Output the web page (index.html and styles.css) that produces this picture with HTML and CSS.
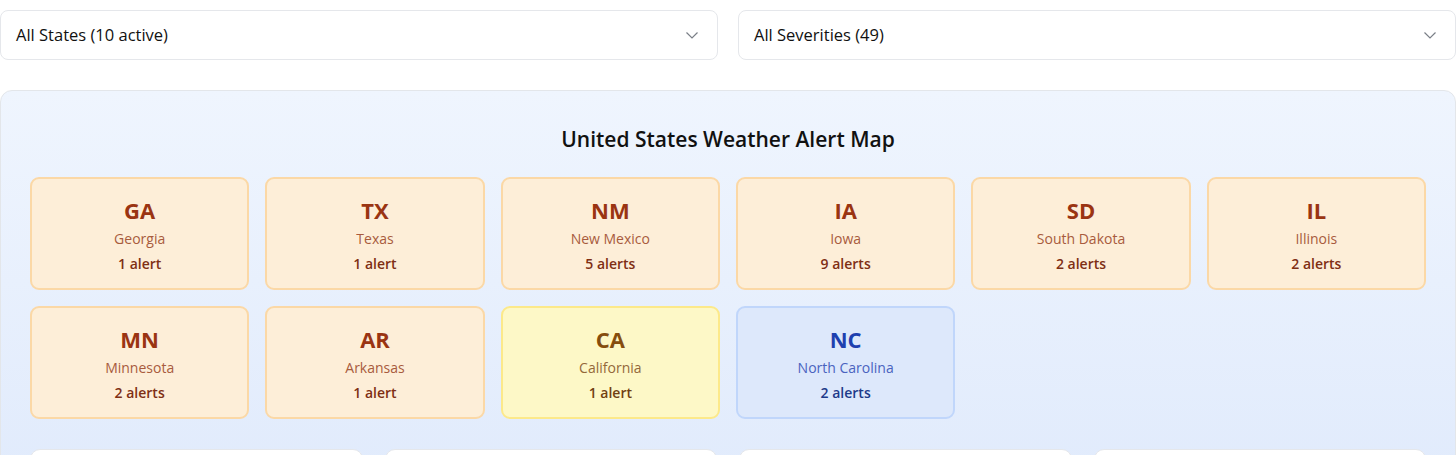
FILE: index.html
```html
<!DOCTYPE html>
<html lang="en">
<head>
<meta charset="utf-8">
<title>Weather Alerts</title>
<link rel="stylesheet" href="styles.css">
</head>
<body>
<div class="page">
  <div class="filters">
    <div class="select">
      <span class="select-label">All States (10 active)</span>
      <svg class="chevron" width="16" height="16" viewBox="0 0 16 16"><path d="M2.5 5.5 L8 11 L13.5 5.5" fill="none" stroke="#7a7f87" stroke-width="1.2"/></svg>
    </div>
    <div class="select">
      <span class="select-label">All Severities (49)</span>
      <svg class="chevron" width="16" height="16" viewBox="0 0 16 16"><path d="M2.5 5.5 L8 11 L13.5 5.5" fill="none" stroke="#7a7f87" stroke-width="1.2"/></svg>
    </div>
  </div>

  <section class="map-panel">
    <h2 class="map-title">United States Weather Alert Map</h2>
    <div class="state-grid">
      <div class="state-card orange"><div class="code">GA</div><div class="name">Georgia</div><div class="count">1 alert</div></div>
      <div class="state-card orange"><div class="code">TX</div><div class="name">Texas</div><div class="count">1 alert</div></div>
      <div class="state-card orange"><div class="code">NM</div><div class="name">New Mexico</div><div class="count">5 alerts</div></div>
      <div class="state-card orange"><div class="code">IA</div><div class="name">Iowa</div><div class="count">9 alerts</div></div>
      <div class="state-card orange"><div class="code">SD</div><div class="name">South Dakota</div><div class="count">2 alerts</div></div>
      <div class="state-card orange"><div class="code">IL</div><div class="name">Illinois</div><div class="count">2 alerts</div></div>
      <div class="state-card orange"><div class="code">MN</div><div class="name">Minnesota</div><div class="count">2 alerts</div></div>
      <div class="state-card orange"><div class="code">AR</div><div class="name">Arkansas</div><div class="count">1 alert</div></div>
      <div class="state-card yellow"><div class="code">CA</div><div class="name">California</div><div class="count">1 alert</div></div>
      <div class="state-card blue"><div class="code">NC</div><div class="name">North Carolina</div><div class="count">2 alerts</div></div>
    </div>
    <div class="stats">
      <div class="stat-card"></div>
      <div class="stat-card"></div>
      <div class="stat-card"></div>
      <div class="stat-card"></div>
    </div>
  </section>
</div>
</body>
</html>
```
FILE: styles.css
```css
* { box-sizing: border-box; }
html, body { margin: 0; padding: 0; background: #ffffff; }
body {
  font-family: "Open Sans", "Noto Sans", "Liberation Sans", sans-serif;
  color: #111111;
}
.page {
  width: 1456px;
  padding-top: 10px;
}
.filters {
  display: grid;
  grid-template-columns: 1fr 1fr;
  gap: 20px;
  margin-bottom: 30px;
}
.select {
  height: 50px;
  background: #ffffff;
  border: 1px solid #e5e7eb;
  border-radius: 8px;
  display: flex;
  align-items: center;
  justify-content: space-between;
  padding: 0 17px 1px 15px;
}
.select-label {
  font-size: 16.5px;
  line-height: 22px;
  color: #111111;
}
.chevron { display: block; }
.map-panel {
  border: 1px solid #e3e6ea;
  border-radius: 12px;
  background: linear-gradient(180deg, #eff5fe 0px, #e1ebfc 380px, #dde8fb 100%);
  padding: 34px 29px 29px;
}
.map-title {
  margin: 0 0 24px;
  text-align: center;
  font-size: 21px;
  line-height: 28px;
  font-weight: 600;
  color: #111111;
}
.state-grid {
  display: grid;
  grid-template-columns: repeat(6, 1fr);
  gap: 16px;
  margin-bottom: 30px;
}
.state-card {
  height: 113px;
  border: 2px solid;
  border-radius: 9px;
  padding: 17px 8px 13px;
  text-align: center;
}
.code {
  font-size: 22px;
  line-height: 28px;
  font-weight: 700;
}
.name {
  font-size: 14px;
  line-height: 20px;
  margin-top: 5px;
}
.count {
  font-size: 14px;
  line-height: 20px;
  margin-top: 5px;
  font-weight: 600;
}
.orange { background: #fdeed8; border-color: #fbd8a6; }
.orange .code { color: #9a3412; }
.orange .name { color: #a85b3d; }
.orange .count { color: #7f2f14; }
.yellow { background: #fdf8c7; border-color: #fce98a; }
.yellow .code { color: #854d0e; }
.yellow .name { color: #94683a; }
.yellow .count { color: #713f12; }
.blue { background: #dde8fb; border-color: #c0d6fb; }
.blue .code { color: #1e40af; }
.blue .name { color: #4a63bf; }
.blue .count { color: #1e3a8a; }
.stats {
  display: grid;
  grid-template-columns: repeat(4, 1fr);
  gap: 22px;
}
.stat-card {
  height: 110px;
  background: #ffffff;
  border: 1px solid #e5e7eb;
  border-radius: 10px;
}
```
